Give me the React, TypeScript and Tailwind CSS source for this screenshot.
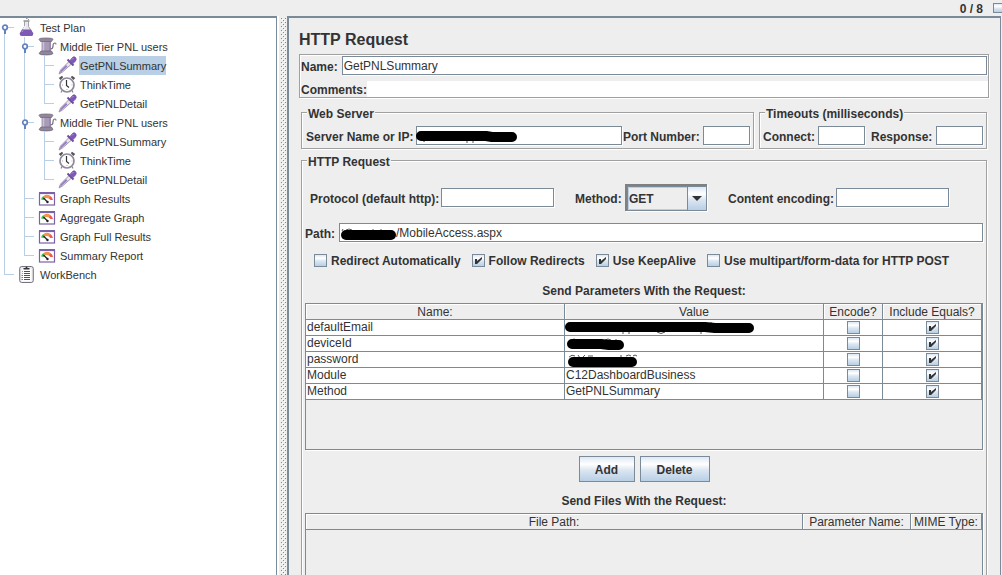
import React, { useState } from 'react';
import clsx from 'clsx';

type Guide = 'none' | 'line' | 'tee' | 'end' | 'knob' | 'rootKnob';
type IconName = 'flask' | 'spool' | 'dropper' | 'timer' | 'gauge' | 'clipboard';

interface TreeNode {
  label: string;
  icon: IconName;
  guides: Guide[];
}

interface Param {
  name: string;
  value: string;
  mark?: { d: string; peek?: string };
}

const treeNodes: TreeNode[] = [
  { label: 'Test Plan', icon: 'flask', guides: ['rootKnob'] },
  { label: 'Middle Tier PNL users', icon: 'spool', guides: ['line', 'knob'] },
  { label: 'GetPNLSummary', icon: 'dropper', guides: ['line', 'line', 'tee'] },
  { label: 'ThinkTime', icon: 'timer', guides: ['line', 'line', 'tee'] },
  { label: 'GetPNLDetail', icon: 'dropper', guides: ['line', 'line', 'end'] },
  { label: 'Middle Tier PNL users', icon: 'spool', guides: ['line', 'knob'] },
  { label: 'GetPNLSummary', icon: 'dropper', guides: ['line', 'line', 'tee'] },
  { label: 'ThinkTime', icon: 'timer', guides: ['line', 'line', 'tee'] },
  { label: 'GetPNLDetail', icon: 'dropper', guides: ['line', 'line', 'end'] },
  { label: 'Graph Results', icon: 'gauge', guides: ['line', 'tee'] },
  { label: 'Aggregate Graph', icon: 'gauge', guides: ['line', 'tee'] },
  { label: 'Graph Full Results', icon: 'gauge', guides: ['line', 'tee'] },
  { label: 'Summary Report', icon: 'gauge', guides: ['line', 'end'] },
  { label: 'WorkBench', icon: 'clipboard', guides: ['end'] },
];

const params: Param[] = [
  {
    name: 'defaultEmail',
    value: '',
    mark: { d: 'M5 7H140L150 8H184', peek: 'M58 12v2M64 12v2M92 12q4 3 8 0M136 12v2M146 2v2' },
  },
  { name: 'deviceId', value: '', mark: { d: 'M7 8H36L44 9H54', peek: 'M6 4q3-2 6 0M40 4q3-2 6 0M50 4h2' } },
  { name: 'password', value: '', mark: { d: 'M8 10H67', peek: 'M4 5q3-3 6-1M13 3l2 3M18 5l2-2M23 4h5M56 3v3M61 4q3-2 5 0M68 4q2-2 4 0' } },
  { name: 'Module', value: 'C12DashboardBusiness' },
  { name: 'Method', value: 'GetPNLSummary' },
];

const fieldClass =
  'h-[19px] min-w-0 rounded-none border border-[#7a8a99] bg-white px-px pt-px text-xs font-normal text-[#333] shadow-[1px_1px_0_#fff] outline-none';
const labelClass = 'shrink-0 pt-0.5 whitespace-nowrap';
const metalClass = 'bg-[linear-gradient(#dde8f3,#fff_30%,#dbe6f2_55%,#b8cfe5)]';
const groupClass = 'min-w-0 border border-[#a0a0a0] shadow-[inset_1px_1px_0_#fff,1px_1px_0_#fff]';
const legendClass = 'ml-[5px] bg-[#eee] px-px pt-1 leading-[15px]';

function GuideCell({ kind, last }: { kind: Guide; last: boolean }) {
  const knob = kind === 'knob' || kind === 'rootKnob';
  return (
    <svg className={clsx('h-[19px] shrink-0', last ? 'w-[18px]' : 'w-5')} shapeRendering="crispEdges">
      {(kind === 'line' || kind === 'tee') && <rect x="4" width="1" height="19" fill="#b8cfe5" />}
      {kind === 'end' && <rect x="4" width="1" height="10" fill="#b8cfe5" />}
      {kind === 'knob' && <rect x="4" width="1" height="19" fill="#b8cfe5" />}
      {kind === 'rootKnob' && <rect x="4" y="10" width="1" height="9" fill="#b8cfe5" />}
      {(kind === 'tee' || kind === 'end' || knob) && <rect x="4" y="9" width="10" height="1" fill="#b8cfe5" />}
      {knob && (
        <g shapeRendering="auto">
          <rect x="4" y="11" width="2" height="5" fill="#6382bf" />
          <circle cx="5" cy="9.500" r="2.300" fill="#fff" stroke="#6382bf" strokeWidth="1.700" />
        </g>
      )}
    </svg>
  );
}

function TreeIcon({ name }: { name: IconName }) {
  return (
    <svg viewBox="0 0 20 19" className="h-[19px] w-5 shrink-0">
      {name === 'flask' && (
        <>
          <path d="M6.500 3.500v5L2.500 15q-.8 2.500 1.500 2.500h9q2.300 0 1.500-2.500L10.500 8.500v-5" fill="#e9e7ee" stroke="#a5a0ae" />
          <path d="M4 11.500h9l2.300 4q0 2.500-2.300 2.500H4q-2.300 0-2.300-2.500z" fill="#7d5bb5" />
          <path d="M5.500 3h6" stroke="#777" strokeWidth="1.200" />
          <path d="M8 .5h1.500M10 1.500h1" stroke="#999" />
          <path d="M5.500 11l2-3.500" stroke="#fff" />
          <path d="M4 14l1-1.500" stroke="#b79be0" />
        </>
      )}
      {name === 'spool' && (
        <>
          <path d="M3.500 4h9.500v11H3.500z" fill="#a99bb8" />
          <path d="M5.500 4v11" stroke="#c9c0d3" strokeWidth="1.500" />
          <path d="M12 4v11" stroke="#8a7c9a" />
          <path d="M1 2.300Q1 1 8 1t7 1.300L13.500 4.500h-11z" fill="#91879c" stroke="#6d6376" strokeWidth=".7" />
          <path d="M1 16.500L3 14h10.500l1.500 2.500Q14 18 8 18t-7-1.500z" fill="#91879c" stroke="#6d6376" strokeWidth=".7" />
          <path d="M12.500 12q2.500 0 2.500-3t2-3q1 0 1 1.500" fill="none" stroke="#7c7186" strokeWidth="1.200" />
        </>
      )}
      {name === 'dropper' && (
        <>
          <path d="M1 18l1.500-4L11 5.500l2.500 2.500-9 8z" fill="#e6e3ea" stroke="#99949f" strokeWidth=".9" />
          <path d="M1.500 17.500l1.500-3.500 5-5 1.500 1.500-5.500 5z" fill="#9a7bcc" />
          <path d="M9.500 3.500l6 6" stroke="#6d4aa3" strokeWidth="2" />
          <path d="M12 4.500l2.500-3q1.500-1.500 3 0t0 3.500L15 7.500z" fill="#7e57b8" stroke="#6d4aa3" strokeWidth=".8" />
          <path d="M14 3.500l1.500-1.500" stroke="#b79be0" />
        </>
      )}
      {name === 'timer' && (
        <>
          <path d="M.8 3L4 .8l1.200 1.500L2.500 5zM17.200 3L14 .8l-1.200 1.500L15.500 5z" fill="#555" />
          <path d="M4 15.500l-1 2M14 15.500l1 2" stroke="#888" strokeWidth="1.200" />
          <circle cx="9" cy="10" r="7" fill="#fff" stroke="#918a9c" strokeWidth="1.700" />
          <path d="M8.500 5v5.500l2.500 2" fill="none" stroke="#333" strokeWidth="1.200" />
          <path d="M4 10h1M13.500 10h1M9 15v-1" stroke="#aaa" />
        </>
      )}
      {name === 'gauge' && (
        <>
          <rect x="1.500" y="4.500" width="15" height="11.500" fill="#fff" stroke="#7b62a8" strokeWidth="1.200" />
          <path d="M1 4h16" stroke="#7b62a8" strokeWidth="2" />
          <path d="M3 10.500q.5-2.200 2.300-3.500l1.900 2.200-1.500 1.800z" fill="#3fbf4b" />
          <path d="M5.300 7.200Q9 4.500 12.500 7L11 9.500Q9 8.700 7.200 9.200z" fill="#f2944a" />
          <path d="M12.300 6.900q2.200 1.300 2.700 4l-2.700.2-1.500-1.800z" fill="#ee5a52" />
          <path d="M5.500 9L9.500 13" stroke="#222" strokeWidth="1.300" />
          <circle cx="9.500" cy="13" r="1.200" fill="#222" />
        </>
      )}
      {name === 'clipboard' && (
        <>
          <rect x="1.700" y="1.500" width="13.600" height="16" rx="2" fill="#e9e7ee" stroke="#77727f" />
          <rect x="3.500" y="3.500" width="10" height="13" fill="#fff" />
          <path d="M5.500 3h2q0-1.500 1-1.500t1 1.500h2v1.500h-6z" fill="#333" />
          <path d="M6 6.500h6M6 8.500h6M6 10.500h6M6 12.500h6M6 14.500h6" stroke="#55515c" />
          <path d="M4 6.500h1M4 8.500h1" stroke="#999" />
          <path d="M3.500 10.500H5M3.500 12.500H5M3.500 14.500H5" stroke="#3fae3f" />
        </>
      )}
    </svg>
  );
}

// Black marker stroke that hides a private value
function Marker({ d, peek }: { d: string; peek?: string }) {
  return (
    <svg className="pointer-events-none absolute top-0 left-0 h-4 w-52 overflow-visible" fill="none">
      {peek && <path d={peek} stroke="#555" />}
      <path d={d} stroke="#000" strokeWidth="10" strokeLinecap="round" strokeLinejoin="round" />
    </svg>
  );
}

function CheckBox({ id, label, checked }: { id?: string; label?: string; checked?: boolean }) {
  return (
    <span className="grid size-[13px] shrink-0">
      <input
        id={id}
        type="checkbox"
        aria-label={label}
        defaultChecked={checked}
        className={clsx('peer col-start-1 row-start-1 size-[13px] appearance-none border border-[#7a8a99]', metalClass)}
      />
      <svg
        viewBox="0 0 13 13"
        className="pointer-events-none col-start-1 row-start-1 hidden size-[13px] peer-checked:block"
      >
        <path d="M3 5h2v2l5-4v2L5 10H3z" fill="#333" />
      </svg>
    </span>
  );
}

function CheckOption({ id, text, checked }: { id: string; text: string; checked?: boolean }) {
  return (
    <div className="flex h-[15px] items-center gap-1">
      <CheckBox id={id} checked={checked} />
      <label htmlFor={id} className={labelClass}>{text}</label>
    </div>
  );
}

function MetalButton({ className, children }: { className: string; children: React.ReactNode }) {
  return (
    <button type="button" className={clsx('h-[26px] border border-[#7a8a99] pt-px font-bold', metalClass, className)}>
      {children}
    </button>
  );
}

function HeaderCell({ children }: { children: React.ReactNode }) {
  return (
    <th className="h-4 overflow-hidden border-r border-b border-[#7a8a99] p-0 pt-0.5 text-center leading-[13px] font-normal whitespace-nowrap shadow-[inset_1px_1px_0_#fff]">
      {children}
    </th>
  );
}

function TestTree() {
  const [selected, setSelected] = useState(2);

  return (
    <nav className="w-[277px] shrink-0 border-t-2 border-r border-[#7a8a99] bg-white text-[11px] font-normal">
      <ul>
        {treeNodes.map((node, i) => (
          <li key={i} className="flex h-[19px]">
            {node.guides.map((kind, g) => (
              <GuideCell key={g} kind={kind} last={g === node.guides.length - 1} />
            ))}
            <TreeIcon name={node.icon} />
            <button
              type="button"
              onClick={() => setSelected(i)}
              className={clsx('ml-px pt-0.5 pl-px leading-[17px] whitespace-nowrap', i === selected && 'bg-[#b8cfe5]')}
            >
              {node.label}
            </button>
          </li>
        ))}
      </ul>
    </nav>
  );
}

function Divider() {
  return (
    <div className="w-2.5 shrink-0 border-l-2 border-white pt-0.5 pl-0.5">
      <svg className="h-full w-[5px]" shapeRendering="crispEdges">
        <defs>
          <pattern id="bumps" width="4" height="4" patternUnits="userSpaceOnUse">
            <rect width="1" height="1" fill="#7a8a99" />
            <rect x="2" y="2" width="1" height="1" fill="#7a8a99" />
            <rect x="1" y="1" width="1" height="1" fill="#fff" />
            <rect x="3" y="3" width="1" height="1" fill="#fff" />
          </pattern>
        </defs>
        <rect width="100%" height="100%" fill="url(#bumps)" />
      </svg>
    </div>
  );
}

function ServerSettings() {
  return (
    <div className="mt-[5px] flex gap-[5px] px-0.5">
      <fieldset className={clsx(groupClass, 'flex-1')}>
        <legend className={legendClass}>Web Server</legend>
        <div className="flex items-center pt-1 pr-[3px] pb-[3px] pl-1">
          <label htmlFor="server" className={clsx(labelClass, 'w-[110px]')}>Server Name or IP:</label>
          <div className="relative flex min-w-0 flex-1">
            <input id="server" className={clsx(fieldClass, 'w-full')} />
            <Marker d="M5 10H70L76 11H96" peek="M7 15q2 1 3-1M51 14v3M57 14v3M80 6v2M90 6v2" />
          </div>
          <label htmlFor="port" className={clsx(labelClass, 'ml-px w-20')}>Port Number:</label>
          <input id="port" className={clsx(fieldClass, 'w-[47px]')} />
        </div>
      </fieldset>
      <fieldset className={groupClass}>
        <legend className={legendClass}>Timeouts (milliseconds)</legend>
        <div className="flex items-center pt-1 pr-[3px] pb-[3px] pl-[3px]">
          <label htmlFor="connect" className={clsx(labelClass, 'w-[55px]')}>Connect:</label>
          <input id="connect" className={clsx(fieldClass, 'w-[47px]')} />
          <label htmlFor="response" className={clsx(labelClass, 'ml-1.5 w-[65px]')}>Response:</label>
          <input id="response" className={clsx(fieldClass, 'w-[47px]')} />
        </div>
      </fieldset>
    </div>
  );
}

function MethodSelect() {
  return (
    <div className="relative h-[27px] w-[82px] border-t-2 border-l-2 border-[#808080] shadow-[1px_1px_0_#fff]">
      <select
        id="method"
        defaultValue="GET"
        className="h-[25px] w-full appearance-none rounded-none border border-[#7a8a99] bg-[#eee] pl-px font-bold shadow-[inset_0_0_0_1px_#b8cfe5]"
      >
        <option>GET</option>
        <option>POST</option>
      </select>
      <span
        className={clsx(
          'pointer-events-none absolute top-0 right-0 flex h-[25px] w-5 items-center justify-center border border-[#7a8a99]',
          metalClass,
        )}
      >
        <svg viewBox="0 0 10 5" className="h-[5px] w-2.5">
          <path d="M0 0h10L5 5z" fill="#333" />
        </svg>
      </span>
    </div>
  );
}

function ParamsTable() {
  return (
    <div className="mt-1 h-[147px] border border-[#7a8a99] shadow-[1px_1px_0_#fff]">
      <table className="w-full table-fixed border-separate border-spacing-0 font-normal">
        <colgroup>
          <col />
          <col />
          <col className="w-[59px]" />
          <col className="w-[99px]" />
        </colgroup>
        <thead>
          <tr>
            <HeaderCell>Name:</HeaderCell>
            <HeaderCell>Value</HeaderCell>
            <HeaderCell>Encode?</HeaderCell>
            <HeaderCell>Include Equals?</HeaderCell>
          </tr>
        </thead>
        <tbody className="bg-white">
          {params.map((p) => (
            <tr key={p.name}>
              <td className="h-4 border-r border-b border-[#7a8a99] p-0 pl-px leading-[15px]">{p.name}</td>
              <td className="relative h-4 border-r border-b border-[#7a8a99] p-0 pl-px leading-[15px]">
                {p.value}
                {p.mark && <Marker {...p.mark} />}
              </td>
              <td className="h-4 border-r border-b border-[#7a8a99] p-0">
                <div className="flex h-[15px] items-center justify-center">
                  <CheckBox label={`Encode ${p.name}`} />
                </div>
              </td>
              <td className="h-4 border-r border-b border-[#7a8a99] p-0">
                <div className="flex h-[15px] items-center justify-center">
                  <CheckBox label={`Include equals for ${p.name}`} checked />
                </div>
              </td>
            </tr>
          ))}
        </tbody>
      </table>
    </div>
  );
}

function FilesTable() {
  return (
    <div className="mt-1 h-[147px] border border-[#7a8a99] shadow-[1px_1px_0_#fff]">
      <table className="w-full table-fixed border-separate border-spacing-0 font-normal">
        <colgroup>
          <col />
          <col className="w-[108px]" />
          <col className="w-[71px]" />
        </colgroup>
        <thead>
          <tr>
            <HeaderCell>File Path:</HeaderCell>
            <HeaderCell>Parameter Name:</HeaderCell>
            <HeaderCell>MIME Type:</HeaderCell>
          </tr>
        </thead>
      </table>
    </div>
  );
}

function RequestSettings() {
  return (
    <fieldset className={clsx(groupClass, 'mx-0.5 mt-0.5 px-[3px]')}>
      <legend className="ml-0.5 bg-[#eee] px-px pt-1 leading-[15px]">HTTP Request</legend>
      <div className="flex items-center pt-3.5 pl-[5px]">
        <label htmlFor="protocol" className={clsx(labelClass, 'w-[131px]')}>Protocol (default http):</label>
        <input id="protocol" className={clsx(fieldClass, 'w-[113px]')} />
        <label htmlFor="method" className={clsx(labelClass, 'ml-[21px] w-[50px]')}>Method:</label>
        <MethodSelect />
        <label htmlFor="encoding" className={clsx(labelClass, 'ml-[21px] w-[108px]')}>Content encoding:</label>
        <input id="encoding" className={clsx(fieldClass, 'w-[113px]')} />
      </div>
      <div className="mt-3 flex items-center">
        <label htmlFor="path" className={clsx(labelClass, 'mr-1')}>Path:</label>
        <div className="relative flex min-w-0 flex-1">
          <input id="path" defaultValue="/MobileAccess.aspx" className={clsx(fieldClass, 'w-full pl-14')} />
          <Marker d="M7 12H52" peek="M3 8l1-2M7 7q3-2 6 0M34 6v2M42 6v2" />
        </div>
      </div>
      <div className="mt-[11px] flex gap-[11px] pl-[9px] leading-[15px]">
        <CheckOption id="redirect" text="Redirect Automatically" />
        <CheckOption id="follow" text="Follow Redirects" checked />
        <CheckOption id="keepalive" text="Use KeepAlive" checked />
        <CheckOption id="multipart" text="Use multipart/form-data for HTTP POST" />
      </div>
      <h2 className="mt-4 text-center leading-[15px]">Send Parameters With the Request:</h2>
      <ParamsTable />
      <div className="mt-1.5 flex justify-center gap-[5px]">
        <MetalButton className="w-14">Add</MetalButton>
        <MetalButton className="w-[70px]">Delete</MetalButton>
      </div>
      <h2 className="mt-3 text-center leading-[15px]">Send Files With the Request:</h2>
      <FilesTable />
    </fieldset>
  );
}

function App() {
  return (
    <div className="flex h-screen flex-col overflow-hidden bg-[#eee] font-['Liberation_Sans',Arial,sans-serif] text-xs font-bold text-[#333]">
      <header className="flex h-4 shrink-0 items-center justify-end gap-2.5">
        <span className="pt-0.5">0 / 8</span>
        <span className={clsx('h-2.5 w-[9px] border border-r-0 border-[#7a8a99]', metalClass)} />
      </header>
      <div className="flex min-h-0 flex-1">
        <TestTree />
        <Divider />
        <main className="mr-px min-w-0 flex-1 overflow-hidden border-t-2 border-r border-l-2 border-[#7a8a99] pt-2.5 pr-[11px] pl-2.5">
          <h1 className="mb-0.5 text-base leading-6">HTTP Request</h1>
          <div className={clsx(groupClass, 'flex flex-col gap-1.5 pt-px pl-px')}>
            <div className="flex items-center pr-px">
              <label htmlFor="name" className={clsx(labelClass, 'mr-1')}>Name:</label>
              <input id="name" defaultValue="GetPNLSummary" className={clsx(fieldClass, 'flex-1')} />
            </div>
            <div className="flex h-4 items-center">
              <label htmlFor="comments" className={labelClass}>Comments:</label>
              <input id="comments" className="h-4 min-w-0 flex-1 bg-white text-xs font-normal outline-none" />
            </div>
          </div>
          <ServerSettings />
          <RequestSettings />
        </main>
      </div>
    </div>
  );
}

export default App;
